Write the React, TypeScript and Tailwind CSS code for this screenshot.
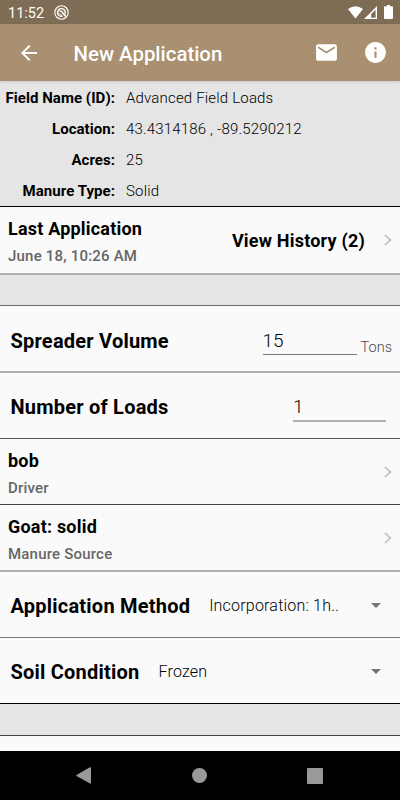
import React from 'react';
import { MdArrowBack, MdArrowDropDown, MdEmail, MdInfo } from 'react-icons/md';

const details = [
  { label: 'Field Name (ID):', value: 'Advanced Field Loads' },
  { label: 'Location:', value: '43.4314186 , -89.5290212' },
  { label: 'Acres:', value: '25' },
  { label: 'Manure Type:', value: 'Solid' },
];

const Chevron: React.FC = () => (
  <svg className="h-3 w-2 shrink-0" viewBox="0 0 8 12" fill="none" stroke="#c4c4c4" strokeWidth="1.8">
    <path d="M1 0.8 L6.4 6 L1 11.2" />
  </svg>
);

const StatusBar: React.FC = () => (
  <div className="flex h-6 shrink-0 items-center bg-[#7f6c54] pl-2 pr-[7px] text-white">
    <span className="pt-[3px] text-[14.5px] leading-5">11:52</span>
    <svg className="ml-[10px] h-[15px] w-[15px]" viewBox="0 0 15 15" fill="none" stroke="white">
      <circle cx="7.5" cy="7.5" r="6.7" strokeWidth="1.1" />
      <path d="M11 9 A3.9 3.9 0 1 0 8.6 11.2" strokeWidth="1.4" />
      <path d="M5.6 6.4 Q8 5.6 8.6 7.8 L11.8 11.6" strokeWidth="1.6" />
      <path d="M4 7.6 Q5.6 9.8 8.2 10.6" strokeWidth="1" />
    </svg>
    <svg className="ml-auto h-[13px] w-[15px]" viewBox="0 0 15 13" fill="white">
      <path d="M0 3 Q7.5 -2.6 15 3 L7.5 12.6 Z" />
    </svg>
    <svg className="ml-px h-[13px] w-[14px]" viewBox="0 0 14 13">
      <path d="M13 0 V13 H0 Z M11.6 3.8 L7.2 8 V11.7 H11.6 Z" fill="white" fillRule="evenodd" />
    </svg>
    <svg className="ml-1.5 h-[14px] w-[9px]" viewBox="0 0 9 14" fill="white">
      <path d="M3 0 H6 V1.3 H8 Q9 1.3 9 2.3 V13 Q9 14 8 14 H1 Q0 14 0 13 V2.3 Q0 1.3 1 1.3 H3 Z" />
    </svg>
  </div>
);

const AppBar: React.FC = () => (
  <header className="z-10 flex h-[57px] shrink-0 items-center bg-[#a89070] pl-[17px] pr-3 text-white shadow-sm">
    <MdArrowBack className="h-[24px] w-[24px]" />
    <h1 className="ml-[32.5px] pt-[3px] text-[20.4px] font-medium leading-6">New Application</h1>
    <MdEmail className="ml-auto h-[25px] w-[25px]" />
    <MdInfo className="ml-6 h-[25px] w-[25px]" />
  </header>
);

interface LinkRowProps {
  title: string;
  subtitle: string;
  action?: string;
  className: string;
}

const LinkRow: React.FC<LinkRowProps> = ({ title, subtitle, action, className }) => (
  <div className={`flex shrink-0 items-center pl-2 pr-2 ${className}`}>
    <div className="flex flex-1 flex-col gap-1.5 pt-1">
      <div className="text-[18px] font-bold leading-[22px] tracking-[0.2px]">{title}</div>
      <div className="text-[15px] font-medium leading-[21px] tracking-[0.2px] text-[#666666]">{subtitle}</div>
    </div>
    {action && <span className="mr-[19px] pt-px text-[18px] font-bold tracking-[0.2px]">{action}</span>}
    <Chevron />
  </div>
);

interface SelectRowProps {
  label: string;
  value: string;
  className: string;
}

const SelectRow: React.FC<SelectRowProps> = ({ label, value, className }) => (
  <div className={`flex shrink-0 items-center pl-[10.5px] pr-3 pt-0.5 ${className}`}>
    <span className="text-[20px] font-bold tracking-[0.22px]">{label}</span>
    <span className="ml-[19px] flex-1 text-[16px] font-light tracking-[0.2px]">{value}</span>
    <MdArrowDropDown className="-mt-0.5 h-6 w-6 text-[#757575]" />
  </div>
);

const NavBar: React.FC = () => (
  <nav className="flex h-[49px] shrink-0 items-center justify-between bg-black pl-[76px] pr-[77px]">
    <svg className="h-[17px] w-[15px]" viewBox="0 0 15 17" fill="#999999">
      <path d="M14 0.3 Q15 0 15 1 V16 Q15 17 14 16.6 L0.5 9 Q0 8.5 0.5 8 Z" />
    </svg>
    <div className="h-[15px] w-[15px] rounded-full bg-[#999999]" />
    <div className="h-4 w-4 rounded-[1px] bg-[#999999]" />
  </nav>
);

const App: React.FC = () => (
  <div className="flex h-[800px] w-[400px] flex-col overflow-hidden bg-[#fafafa] font-['Roboto',sans-serif] text-black">
    <StatusBar />
    <AppBar />

    {/* Field summary */}
    <div className="h-[126px] shrink-0 border-b border-black bg-[#e5e5e5] pt-[2px]">
      {details.map((item) => (
        <div key={item.label} className="flex h-[31px] items-center text-[15px]">
          <span className="w-[115px] text-right font-bold tracking-[0.05px]">{item.label}</span>
          <span className="ml-[11px] font-light tracking-[0.18px]">{item.value}</span>
        </div>
      ))}
    </div>

    <LinkRow
      title="Last Application"
      subtitle="June 18, 10:26 AM"
      action="View History (2)"
      className="h-[68px] border-b-2 border-[#b0b0b0]"
    />
    <div className="h-[31px] shrink-0 border-b border-[#6a6a6a] bg-[#e5e5e5]" />

    {/* Load entry */}
    <div className="flex h-[67px] shrink-0 items-center border-b-2 border-[#b0b0b0] pl-[10.5px] pr-2 pt-1">
      <label htmlFor="volume" className="flex-1 text-[20px] font-bold tracking-[0.22px]">Spreader Volume</label>
      <input
        id="volume"
        defaultValue="15"
        className="h-[29px] w-[94px] border-b border-[#777777] bg-transparent text-[19px] font-light outline-none"
      />
      <span className="ml-1 pt-[14px] text-[14.5px] font-light text-[#4a4a4a]">Tons</span>
    </div>
    <div className="flex h-[66px] shrink-0 items-center border-b border-[#555555] pl-[10.5px] pr-3.5 pt-0.5">
      <label htmlFor="loads" className="flex-1 text-[20px] font-bold tracking-[0.22px]">Number of Loads</label>
      <input
        id="loads"
        defaultValue="1"
        className="h-[31px] w-[93px] border-b-2 border-[#b0b0b0] bg-transparent pt-0.5 text-[19px] font-light outline-none"
      />
    </div>

    <LinkRow title="bob" subtitle="Driver" className="h-[66px] border-b border-[#444444] pt-px" />
    <LinkRow title="Goat: solid" subtitle="Manure Source" className="h-[67px] border-b-2 border-[#b0b0b0] pt-px" />
    <SelectRow label="Application Method" value="Incorporation: 1h.." className="h-[66px] border-b border-[#7a7a7a]" />
    <SelectRow label="Soil Condition" value="Frozen" className="h-[66px] border-b border-black" />
    <div className="h-[32px] shrink-0 border-b border-[#444444] bg-[#e5e5e5]" />
    <div className="flex-1" />

    <NavBar />
  </div>
);

export default App;
